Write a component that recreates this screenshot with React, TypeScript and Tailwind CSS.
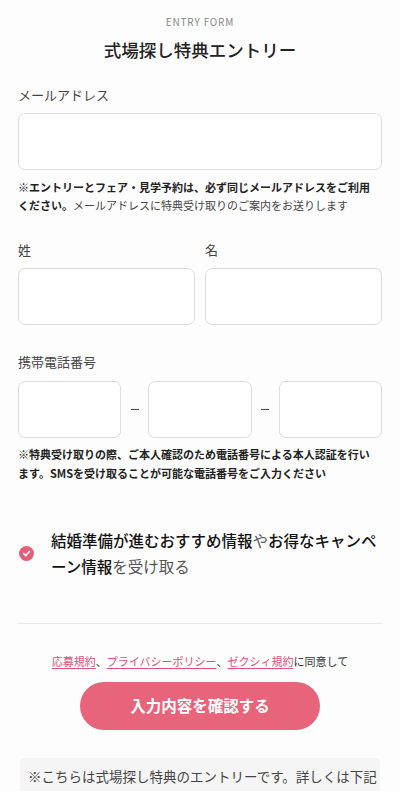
import React from "react";

const FONT = "font-['Noto_Sans_CJK_JP','Noto_Sans',sans-serif]";

function Field({ className = "" }: { className?: string }) {
  return (
    <div
      className={`h-[57px] rounded-[7px] border border-[#dcdcdc] bg-white ${className}`}
    />
  );
}

function Label({ children }: { children: React.ReactNode }) {
  return <p className="text-[13px] leading-[20px] text-[#444]">{children}</p>;
}

function Dash() {
  return (
    <span className="flex w-[27px] justify-center">
      <span className="h-px w-[8px] bg-[#444]" />
    </span>
  );
}

function Check() {
  return (
    <span className="flex h-[15px] w-[15px] shrink-0 items-center justify-center rounded-full bg-[#e35f79]">
      <svg width="9" height="9" viewBox="0 0 10 10" fill="none">
        <path
          d="M2 5.2 4.2 7.3 8.2 2.8"
          stroke="white"
          strokeWidth="1.8"
          strokeLinecap="round"
          strokeLinejoin="round"
        />
      </svg>
    </span>
  );
}

export default function App() {
  return (
    <div className={`${FONT} min-h-[791px] w-[400px] bg-[#fdfdfd] text-[#333]`}>
      <div className="px-[18px]">
        <p className="pt-[14px] text-center text-[10px] leading-[16px] tracking-[0.08em] text-[#888]">
          ENTRY FORM
        </p>
        <h1 className="mt-[6px] text-center text-[17.5px] font-medium leading-[28px] text-[#222]">
          式場探し特典エントリー
        </h1>

        <div className="mt-[21px]">
          <Label>メールアドレス</Label>
          <Field className="mt-[8px]" />
          <p className="mt-[8px] pr-[4px] text-[11px] leading-[18px] text-[#444]">
            <span className="font-bold text-[#222]">
              ※エントリーとフェア・見学予約は、必ず同じメールアドレスをご利用ください。
            </span>
            メールアドレスに特典受け取りのご案内をお送りします
          </p>
        </div>

        <div className="mt-[26px] grid grid-cols-2 gap-[10px]">
          <div>
            <Label>姓</Label>
            <Field className="mt-[8px]" />
          </div>
          <div>
            <Label>名</Label>
            <Field className="mt-[8px]" />
          </div>
        </div>

        <div className="mt-[27px]">
          <Label>携帯電話番号</Label>
          <div className="mt-[9px] flex items-center">
            <Field className="h-[56px] flex-1" />
            <Dash />
            <Field className="h-[56px] flex-1" />
            <Dash />
            <Field className="h-[56px] flex-1" />
          </div>
          <p className="mt-[7px] pr-[4px] text-[11px] font-bold leading-[19px] text-[#222]">
            ※特典受け取りの際、ご本人確認のため電話番号による本人認証を行います。SMSを受け取ることが可能な電話番号をご入力ください
          </p>
        </div>

        <div className="mt-[44px] flex items-center gap-[17px] pl-[1px]">
          <Check />
          <p className="text-[15.5px] leading-[26px] text-[#555]">
            <span className="font-medium text-[#111]">結婚準備が進むおすすめ情報</span>
            や
            <span className="font-medium text-[#111]">お得なキャンペーン情報</span>
            を受け取る
          </p>
        </div>

        <div className="mt-[44px] border-t border-[#e8e8e8]" />

        <p className="mt-[28px] text-center text-[11px] leading-[18px] text-[#333]">
          <span className="text-[#e0507a] underline underline-offset-2">応募規約</span>、
          <span className="text-[#e0507a] underline underline-offset-2">プライバシーポリシー</span>、
          <span className="text-[#e0507a] underline underline-offset-2">ゼクシィ規約</span>
          に同意して
        </p>

        <div className="mt-[12px] flex justify-center">
          <button className="h-[48px] w-[240px] rounded-full bg-[#e8647a] text-[15.5px] font-bold text-white">
            入力内容を確認する
          </button>
        </div>

        <div className="mx-[2px] mt-[28px] overflow-hidden rounded-t-[4px] bg-[#f5f5f5] pl-[8px] pt-[8px] pb-[10px]">
          <p className="whitespace-nowrap text-[13.5px] leading-[20px] text-[#444]">
            ※こちらは式場探し特典のエントリーです。詳しくは下記
          </p>
        </div>
      </div>
    </div>
  );
}
